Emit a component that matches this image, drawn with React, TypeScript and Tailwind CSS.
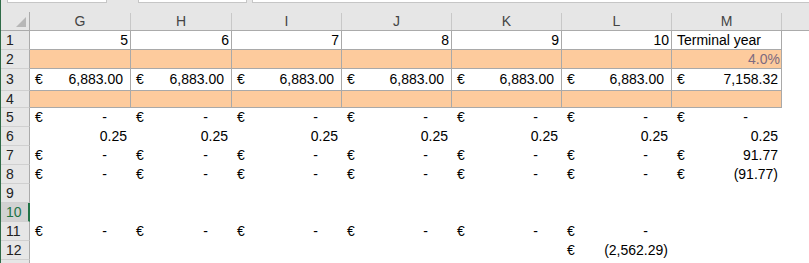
import React from 'react';

type Cell = { e?: boolean; v?: string; pr?: string; cls?: string; left?: boolean };

const colW = ['w-[101px]', 'w-[101px]', 'w-[110px]', 'w-[110px]', 'w-[110px]', 'w-[110px]', 'w-[110px]'];
const letters = ['G', 'H', 'I', 'J', 'K', 'L', 'M'];

const dash: Cell = { e: true, v: '-', pr: 'pr-[23px]' };
const six = (c: Cell) => [c, c, c, c, c, c];

const rows: { h: string; fill?: boolean; cells: Cell[] }[] = [
  {
    h: 'h-[19px]',
    cells: [
      ...['5', '6', '7', '8', '9', '10'].map((v) => ({ v, pr: 'pr-[2px]' })),
      { v: 'Terminal year', left: true, cls: 'pl-[2px]' },
    ],
  },
  {
    h: 'h-[19px]',
    fill: true,
    cells: [...six({}), { v: '4.0%', pr: 'pr-[1px]', cls: 'text-[#7d6a80]' }],
  },
  {
    h: 'h-[22px]',
    cells: [...six({ e: true, v: '6,883.00', pr: 'pr-[7px]' }), { e: true, v: '7,158.32', pr: 'pr-[3px]' }],
  },
  { h: 'h-[17px]', fill: true, cells: [...six({}), {}] },
  { h: 'h-[19px]', cells: [...six(dash), { e: true, v: '-', pr: 'pr-[33px]' }] },
  { h: 'h-[19px]', cells: [...six({ v: '0.25', pr: 'pr-[3px]' }), { v: '0.25', pr: 'pr-[3px]' }] },
  { h: 'h-[19px]', cells: [...six(dash), { e: true, v: '91.77', pr: 'pr-[3px]' }] },
  { h: 'h-[19px]', cells: [...six(dash), { e: true, v: '(91.77)', pr: 'pr-[3px]' }] },
  { h: 'h-[19px]', cells: [] },
  { h: 'h-[19px]', cells: [] },
  { h: 'h-[19px]', cells: [...six(dash), {}] },
  { h: 'h-[19px]', cells: [{}, {}, {}, {}, {}, { e: true, v: '(2,562.29)', pr: 'pr-[3px]' }, {}] },
];

function DataCell({ c, w, bordered, fill }: { c?: Cell; w: string; bordered: boolean; fill?: boolean }) {
  return (
    <div
      className={`${w} h-full shrink-0 flex items-center pl-[5px] ${c?.pr ?? ''} ${
        bordered ? 'border-r border-b border-[#a9a9a9]' : 'border-r border-transparent'
      } ${fill ? 'bg-[#fdcb9d]' : ''} ${c?.cls ?? ''}`}
    >
      {c?.e ? <span>€</span> : null}
      {c?.v ? <span className={`whitespace-nowrap ${c.left ? '' : 'ml-auto'}`}>{c.v}</span> : null}
    </div>
  );
}

export default function App() {
  return (
    <div
      className="w-[809px] h-[263px] overflow-hidden bg-white border-l border-[#2f6b47] text-[14px] text-black"
      style={{ fontFamily: '"Liberation Sans", Arial, sans-serif' }}
    >
      <div className="h-[12px] bg-[#e6e6e6] flex items-start">
        <div className="ml-[6px] w-[100px] h-[3px] bg-white border-b border-x border-[#c6c6c6]" />
        <div className="ml-[31px] w-[109px] h-[3px] bg-white border-b border-x border-[#c6c6c6]" />
        <div className="ml-[5px] flex-1 h-[3px] bg-white border-b border-l border-[#c6c6c6]" />
      </div>
      <div className="h-[19px] flex bg-[#e6e6e6] border-b border-[#ababab] text-[#444]">
        <div className="w-[29px] shrink-0 border-r border-[#ababab] relative">
          <svg className="absolute left-[15px] top-[5px]" width="11" height="11" viewBox="0 0 11 11">
            <polygon points="0,10 10,10 10,0" fill="#b7b7b7" />
          </svg>
        </div>
        {letters.map((l, i) => (
          <div
            key={l}
            className={`${colW[i]} shrink-0 flex items-center justify-center border-r border-[#c8c8c8] mt-[1px]`}
          >
            {l}
          </div>
        ))}
        <div className="flex-1" />
      </div>
      {rows.map((r, ri) => {
        const bordered = ri < 4;
        const sel = ri === 9;
        return (
          <div key={ri} className={`${r.h} flex`}>
            <div
              className={`w-[29px] shrink-0 flex items-center pl-[5px] border-b border-[#d0d0d0] ${
                sel ? 'bg-[#d2d2d2] text-[#217346] border-r-2 border-r-[#217346]' : 'bg-[#e6e6e6] text-[#222] border-r border-r-[#ababab]'
              }`}
            >
              {ri + 1}
            </div>
            {colW.map((w, ci) => (
              <DataCell key={ci} c={r.cells[ci]} w={w} bordered={bordered} fill={r.fill} />
            ))}
            <div className="flex-1" />
          </div>
        );
      })}
      <div className="h-[4px] flex">
        <div className="w-[29px] shrink-0 bg-[#e6e6e6] border-r border-[#ababab]" />
      </div>
    </div>
  );
}
